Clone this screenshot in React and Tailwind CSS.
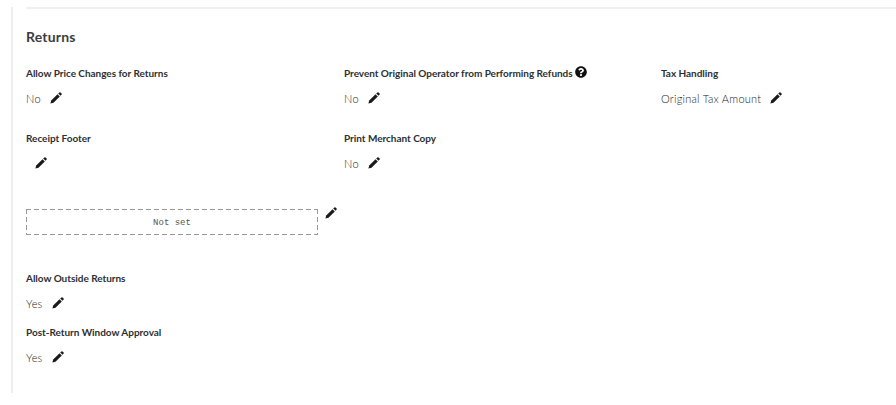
import { FaQuestionCircle } from "react-icons/fa";

function Pencil({ className = "" }) {
  return (
    <svg viewBox="0 0 12 12" className={`w-[12px] h-[12px] shrink-0 text-[#1a1a1a] ${className}`} fill="currentColor">
      <path d="M0.4 11.6 L1.2 8.5 L7.5 2.2 L9.8 4.5 L3.5 10.8 Z" />
      <path d="M8.2 1.5 L9.4 0.4 Q10 0 10.5 0.4 L11.6 1.5 Q12 2 11.6 2.6 L10.5 3.8 Z" />
    </svg>
  );
}

function Label({ children }) {
  return (
    <div className="flex items-center h-[14px] text-[10px] font-bold text-[#2b2f33] leading-none tracking-[-0.03px]">
      {children}
    </div>
  );
}

function Field({ label, value, help, className = "" }) {
  return (
    <div className={className}>
      <Label>
        {label}
        {help && <FaQuestionCircle className="w-[12px] h-[12px] ml-[2px] mb-[3px] text-[#111]" />}
      </Label>
      <div className="flex items-center h-[16px] mt-[10px] text-[11px] font-light text-[#222] leading-none tracking-[0.25px]">
        <span>{value}</span>
        <Pencil className="ml-[9px]" />
      </div>
    </div>
  );
}

export default function App() {
  return (
    <div className="h-[405px] bg-white overflow-hidden pt-[7px] font-['Lato','Noto_Sans',sans-serif]">
      <div className="ml-[11px] h-[386px] border-l-2 border-[#eeeeee] pl-[13px]">
        <div className="h-[2px] bg-[#f0f0f0]" />
        <h2 className="mt-[20px] text-[14px] leading-[16px] font-bold text-[#3a3d40] tracking-[0.2px]">Returns</h2>

        <div className="grid grid-cols-[318px_317px_1fr] mt-[21px]">
          <Field label="Allow Price Changes for Returns" value="No" />
          <Field label="Prevent Original Operator from Performing Refunds" value="No" help />
          <Field label="Tax Handling" value="Original Tax Amount" />
        </div>

        <div className="grid grid-cols-[318px_317px_1fr] mt-[25px]">
          <div>
            <Label>Receipt Footer</Label>
            <div className="flex items-center h-[16px] mt-[10px] pl-[9px]">
              <Pencil />
            </div>
          </div>
          <Field label="Print Merchant Copy" value="No" />
        </div>

        <div className="flex items-start mt-[38px]">
          <div className="w-[292px] h-[26px] pt-[3px] flex items-center justify-center font-['Liberation_Mono',monospace] text-[9px] text-[#555] bg-no-repeat [background-image:repeating-linear-gradient(90deg,#999_0_5px,transparent_5px_8px),repeating-linear-gradient(90deg,#999_0_5px,transparent_5px_8px),repeating-linear-gradient(180deg,#999_0_5px,transparent_5px_8px),repeating-linear-gradient(180deg,#999_0_5px,transparent_5px_8px)] [background-size:100%_1px,100%_1px,1px_100%,1px_100%] [background-position:0_0,0_100%,0_0,100%_0]">
            Not set
          </div>
          <Pencil className="ml-[7px] -mt-[2px]" />
        </div>

        <Field label="Allow Outside Returns" value="Yes" className="mt-[36px]" />
        <Field label="Post-Return Window Approval" value="Yes" className="mt-[14px]" />
      </div>
    </div>
  );
}
